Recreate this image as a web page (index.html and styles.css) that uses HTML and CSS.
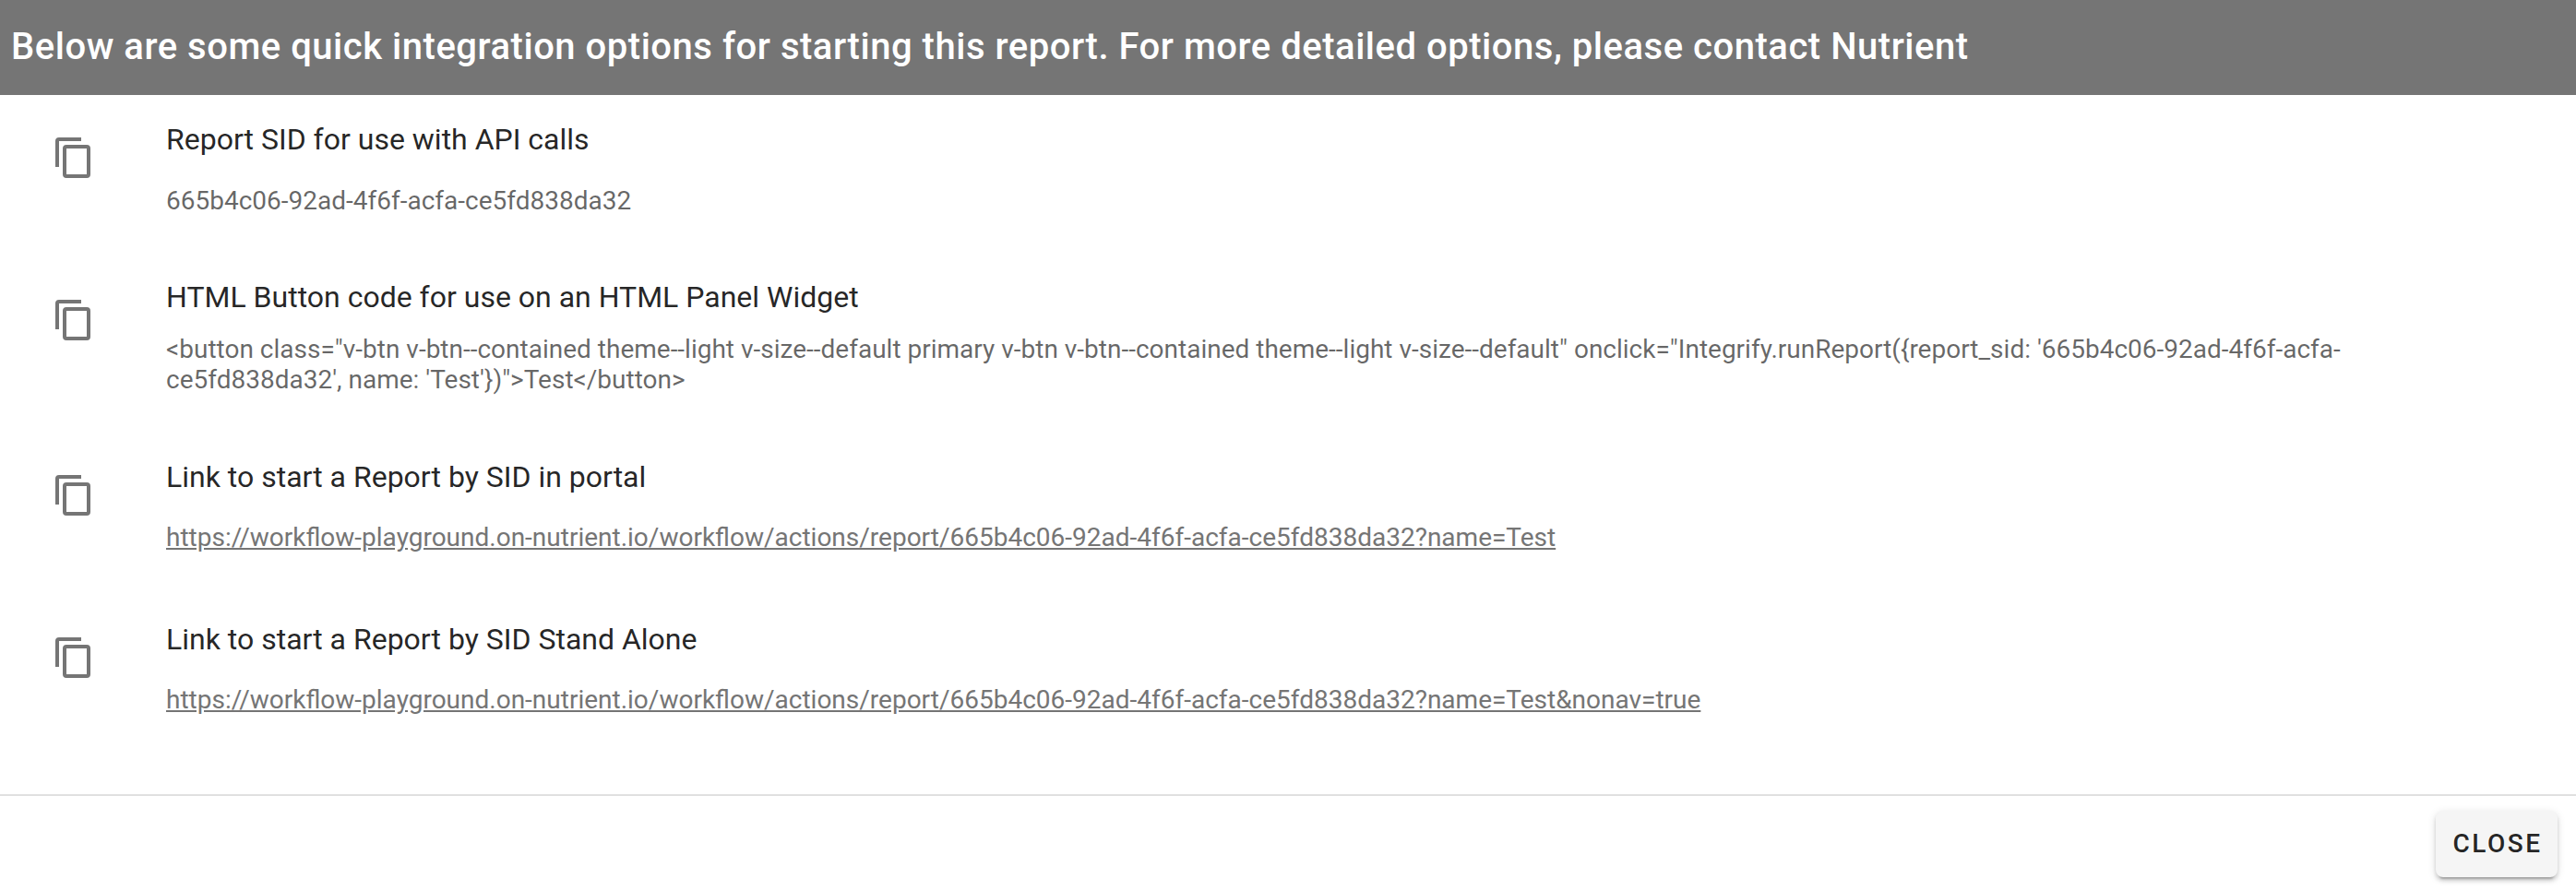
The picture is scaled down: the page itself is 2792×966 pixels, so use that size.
FILE: index.html
```
<!DOCTYPE html>
<html lang="en">
<head>
    <meta charset="UTF-8">
    <meta name="viewport" content="width=device-width, initial-scale=1.0">
    <title>Report Integration Options</title>
    <link rel="stylesheet" href="styles.css">
</head>
<body>
    <svg class="sprite" width="0" height="0">
        <symbol id="copy" viewBox="0 0 24 24">
            <path d="M19,21H8V7H19M19,5H8A2,2 0 0,0 6,7V21A2,2 0 0,0 8,23H19A2,2 0 0,0 21,21V7A2,2 0 0,0 19,5M16,1H4A2,2 0 0,0 2,3V17H4V3H16V1Z"/>
        </symbol>
    </svg>

    <div class="dialog">
        <h1 class="dialog-title">Below are some quick integration options for starting this report. For more detailed options, please contact Nutrient</h1>

        <div class="list">
            <div class="item">
                <svg class="icon"><use href="#copy"/></svg>
                <div class="content">
                    <div class="item-title">Report SID for use with API calls</div>
                    <div class="item-text">665b4c06-92ad-4f6f-acfa-ce5fd838da32</div>
                </div>
            </div>

            <div class="item item-code">
                <svg class="icon"><use href="#copy"/></svg>
                <div class="content">
                    <div class="item-title">HTML Button code for use on an HTML Panel Widget</div>
                    <div class="item-text">&lt;button class="v-btn v-btn--contained theme--light v-size--default primary v-btn v-btn--contained theme--light v-size--default" onclick="Integrify.runReport({report_sid: '665b4c06-92ad-4f6f-acfa-ce5fd838da32', name: 'Test'})"&gt;Test&lt;/button&gt;</div>
                </div>
            </div>

            <div class="item">
                <svg class="icon"><use href="#copy"/></svg>
                <div class="content">
                    <div class="item-title">Link to start a Report by SID in portal</div>
                    <div class="item-text"><a href="#">https://workflow-playground.on-nutrient.io/workflow/actions/report/665b4c06-92ad-4f6f-acfa-ce5fd838da32?name=Test</a></div>
                </div>
            </div>

            <div class="item">
                <svg class="icon"><use href="#copy"/></svg>
                <div class="content">
                    <div class="item-title">Link to start a Report by SID Stand Alone</div>
                    <div class="item-text"><a href="#">https://workflow-playground.on-nutrient.io/workflow/actions/report/665b4c06-92ad-4f6f-acfa-ce5fd838da32?name=Test&amp;nonav=true</a></div>
                </div>
            </div>
        </div>

        <div class="actions">
            <button class="btn">CLOSE</button>
        </div>
    </div>
</body>
</html>
```
FILE: styles.css
```
* {
    box-sizing: border-box;
}
body {
    margin: 0;
    background: #fff;
    font-family: Roboto, sans-serif;
    color: rgba(0,0,0,0.87);
}
.sprite {
    position: absolute;
}
.dialog {
    display: flex;
    flex-direction: column;
    height: 966px;
    overflow: hidden;
}
.dialog-title {
    height: 103px;
    margin: 0;
    padding: 19px 12px 0;
    background: #757575;
    color: #fff;
    font-size: 40px;
    font-weight: 500;
    line-height: 64px;
    letter-spacing: 0.013em;
}
.list {
    flex: 1;
    padding-top: 8px;
}
.item {
    display: flex;
    height: 176px;
    padding: 0 96px 0 56px;
}
.item-code {
    height: 190px;
}
.icon {
    flex: none;
    width: 48px;
    height: 48px;
    margin: 36px 76px 0 0;
    fill: #757575;
}
.content {
    flex: 1;
    padding-top: 21px;
}
.item-title {
    margin-bottom: 30px;
    font-size: 32px;
    line-height: 38.4px;
}
.item-text {
    font-size: 28px;
    line-height: 33.6px;
    color: rgba(0,0,0,0.6);
}
.item:first-child .item-title {
    margin-bottom: 31px;
}
.item-text a {
    color: #757575;
}
.item-code .content {
    padding-top: 16px;
}
.item-code .item-title {
    margin-bottom: 20.6px;
}
.item-code .item-text {
    line-height: 33px;
}
.actions {
    display: flex;
    justify-content: flex-end;
    height: 105px;
    padding: 16px 20px 0;
    border-top: 2px solid #e0e0e0;
}
.btn {
    width: 132px;
    height: 72px;
    padding: 0 0 2px 2px;
    border: none;
    border-radius: 8px;
    background: #f5f5f5;
    color: rgba(0,0,0,0.87);
    font-family: inherit;
    font-size: 28px;
    font-weight: 500;
    letter-spacing: 0.0892857em;
    cursor: pointer;
    box-shadow: 0 6px 2px -4px rgba(0,0,0,0.2), 0 4px 4px 0 rgba(0,0,0,0.14), 0 2px 10px 0 rgba(0,0,0,0.12);
}
```
